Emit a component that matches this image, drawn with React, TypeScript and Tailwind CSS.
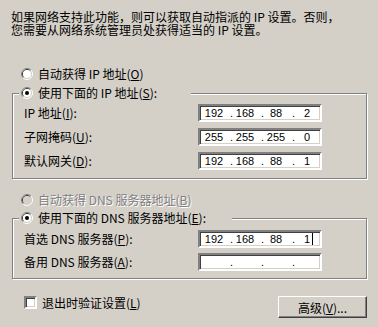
import type { ReactNode } from 'react';

// Win2000-style TCP/IP properties page (Chinese UI)

function Radio({ checked = false, disabled = false }: { checked?: boolean; disabled?: boolean }) {
  return (
    <svg width="12" height="12" viewBox="0 0 12 12" className="shrink-0">
      <path d="M2.11 9.89 A5.5 5.5 0 0 1 9.89 2.11" fill="none" stroke="#808080" />
      <path d="M9.89 2.11 A5.5 5.5 0 0 1 2.11 9.89" fill="none" stroke="#ffffff" />
      <path d="M2.82 9.18 A4.5 4.5 0 0 1 9.18 2.82" fill="none" stroke="#404040" />
      <path d="M9.18 2.82 A4.5 4.5 0 0 1 2.82 9.18" fill="none" stroke="#d4d0c8" />
      <circle cx="6" cy="6" r="4" fill={disabled ? '#d4d0c8' : '#ffffff'} />
      {checked && <circle cx="6" cy="6" r="2" fill="#000000" />}
    </svg>
  );
}

function Key({ k }: { k: string }) {
  return (
    <>
      (<span className="underline underline-offset-[1px]">{k}</span>)
    </>
  );
}

function IpBox({ parts, caret = false }: { parts: string[]; caret?: boolean }) {
  return (
    <div className="w-[124px] h-[18px] bg-white border-2 border-t-[#808080] border-l-[#808080] border-b-white border-r-white shadow-[inset_1px_1px_0_#404040,inset_-1px_-1px_0_#d4d0c8] flex pl-[2px] font-['Liberation_Sans',Arial,sans-serif] text-[11px] leading-[14px] whitespace-nowrap">
      {parts.map((p, i) => (
        <div key={i} className="flex">
          <span className="w-[28px] pr-[4px] text-center">
            {p}
            {caret && i === 3 && (
              <span className="inline-block w-[1px] h-[12px] bg-black align-[-2px] ml-[2px] mr-[-3px]" />
            )}
          </span>
          {i < 3 && <span className="w-[3px] text-center">.</span>}
        </div>
      ))}
    </div>
  );
}

function GroupBox({
  legend,
  legendWidth,
  height,
  children,
}: {
  legend: ReactNode;
  legendWidth: string;
  height: string;
  children: ReactNode;
}) {
  return (
    <div
      className={`relative ml-[12px] w-[355px] ${height} border border-[#808080] shadow-[inset_1px_1px_0_#ffffff,1px_1px_0_#ffffff]`}
    >
      <div
        className={`absolute top-[-8px] left-[6px] ${legendWidth} h-[13px] bg-[#d4d0c8] pl-[2px] flex items-center gap-[5px]`}
      >
        {legend}
      </div>
      {children}
    </div>
  );
}

export default function App() {
  return (
    <div className="w-[378px] h-[327px] overflow-hidden bg-[#d4d0c8] text-black text-[12px] font-['Noto_Sans_CJK_SC','Noto_Sans',sans-serif]">
      <p className="pt-[10px] pl-[11px] leading-[13px] whitespace-nowrap">
        如果网络支持此功能，则可以获取自动指派的 IP 设置。否则，
        <br />
        您需要从网络系统管理员处获得适当的 IP 设置。
      </p>

      <div className="mt-[31px] ml-[21px] h-[13px] flex items-center gap-[5px]">
        <Radio />
        <span className="leading-[13px] whitespace-nowrap">
          自动获得 IP 地址<Key k="O" />
        </span>
      </div>

      <div className="mt-[13px]">
        <GroupBox
          height="h-[86px]"
          legendWidth="w-[172px]"
          legend={
            <>
              <Radio checked />
              <span className="leading-[13px] whitespace-nowrap">
                使用下面的 IP 地址<Key k="S" />:
              </span>
            </>
          }
        >
          <div className="pt-[10px] pl-[11px] flex flex-col gap-[6px]">
            <div className="flex items-center h-[18px]">
              <span className="w-[174px] whitespace-nowrap">
                IP 地址<Key k="I" />:
              </span>
              <IpBox parts={['192', '168', '88', '2']} />
            </div>
            <div className="flex items-center h-[18px]">
              <span className="w-[174px] whitespace-nowrap">
                子网掩码<Key k="U" />:
              </span>
              <IpBox parts={['255', '255', '255', '0']} />
            </div>
            <div className="flex items-center h-[18px]">
              <span className="w-[174px] whitespace-nowrap">
                默认网关<Key k="D" />:
              </span>
              <IpBox parts={['192', '168', '88', '1']} />
            </div>
          </div>
        </GroupBox>
      </div>

      <div className="mt-[14px] ml-[21px] h-[13px] flex items-center gap-[5px]">
        <Radio disabled />
        <span className="leading-[13px] whitespace-nowrap text-[#808080] [text-shadow:1px_1px_0_#ffffff]">
          自动获得 DNS 服务器地址<Key k="B" />
        </span>
      </div>

      <div className="mt-[12px]">
        <GroupBox
          height="h-[61px]"
          legendWidth="w-[213px]"
          legend={
            <>
              <Radio checked />
              <span className="leading-[13px] whitespace-nowrap">
                使用下面的 DNS 服务器地址<Key k="E" />:
              </span>
            </>
          }
        >
          <div className="pt-[11px] pl-[11px] flex flex-col gap-[5px]">
            <div className="flex items-center h-[18px]">
              <span className="w-[174px] whitespace-nowrap">
                首选 DNS 服务器<Key k="P" />:
              </span>
              <IpBox parts={['192', '168', '88', '1']} caret />
            </div>
            <div className="flex items-center h-[18px]">
              <span className="w-[174px] whitespace-nowrap">
                备用 DNS 服务器<Key k="A" />:
              </span>
              <IpBox parts={['', '', '', '']} />
            </div>
          </div>
        </GroupBox>
      </div>

      <div className="mt-[17px] flex justify-between items-start">
        <div className="ml-[24px] h-[13px] flex items-center gap-[5px]">
          <div className="w-[13px] h-[13px] bg-white border-2 border-t-[#808080] border-l-[#808080] border-b-white border-r-white shadow-[inset_1px_1px_0_#404040,inset_-1px_-1px_0_#d4d0c8]" />
          <span className="leading-[13px] whitespace-nowrap">
            退出时验证设置<Key k="L" />
          </span>
        </div>
        <button className="mr-[11px] w-[89px] h-[22px] bg-[#d4d0c8] border border-t-white border-l-white border-b-[#404040] border-r-[#404040] shadow-[inset_-1px_-1px_0_#808080] text-[12px] leading-[13px] whitespace-nowrap">
          高级<Key k="V" />...
        </button>
      </div>
    </div>
  );
}
